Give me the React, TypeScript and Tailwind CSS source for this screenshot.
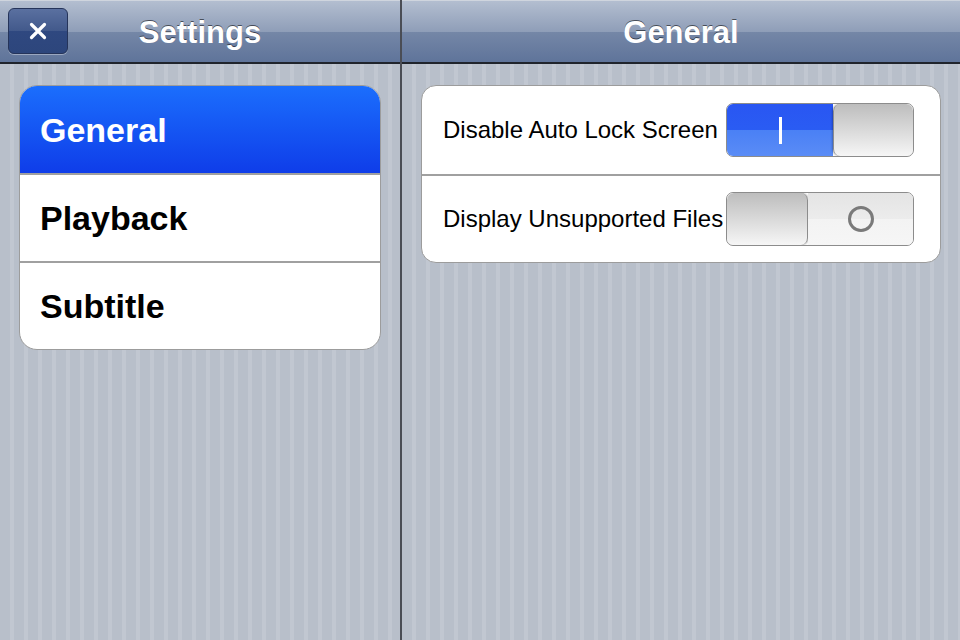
import React from 'react';

const stripes =
  'bg-[repeating-linear-gradient(90deg,#b8bfca_0px,#b8bfca_10px,#c1c7d1_10px,#c1c7d1_14px)]';

function NavBar({ title, withClose }: { title: string; withClose?: boolean }) {
  return (
    <div className="relative h-[64px] border-t border-t-[#cfd5de] border-b-2 border-b-[#20242c] bg-[linear-gradient(180deg,#b3bed0_0%,#8f9eb8_50%,#7587a7_50%,#5f749a_100%)] flex items-center justify-center">
      {withClose && (
        <button className="absolute left-[8px] top-[7px] w-[60px] h-[46px] rounded-[6px] border border-[#25345a] bg-[linear-gradient(180deg,#5a70a0_0%,#42598b_50%,#2f4880_50%,#2d467c_100%)] shadow-[0_1px_0_rgba(255,255,255,0.35)] flex items-center justify-center">
          <svg width="18" height="18" viewBox="0 0 18 18">
            <path d="M2.5 2.5 L15.5 15.5 M15.5 2.5 L2.5 15.5" stroke="#fff" strokeWidth="3.2" strokeLinecap="round" />
          </svg>
        </button>
      )}
      <span className="text-white font-bold text-[31px] leading-none [text-shadow:0_-1px_0_rgba(0,0,0,0.55)] mt-[1px]">
        {title}
      </span>
    </div>
  );
}

function Switch({ on }: { on: boolean }) {
  return (
    <div className="relative w-[188px] h-[54px] rounded-[7px] border border-[#8c8c8c] overflow-hidden flex">
      {on ? (
        <>
          <div className="flex-1 bg-[linear-gradient(180deg,#2956f2_0%,#2a5cf3_50%,#4a80f5_50%,#5a8cf6_100%)] flex items-center justify-center">
            <div className="w-[3px] h-[27px] bg-white" />
          </div>
          <div className="w-[80px] h-full rounded-[7px] border-l border-[#8c8c8c] bg-[linear-gradient(180deg,#bdbdbd_0%,#dcdcdc_55%,#f6f6f6_100%)] shadow-[-1px_0_2px_rgba(0,0,0,0.25)]" />
        </>
      ) : (
        <>
          <div className="w-[81px] h-full rounded-[7px] border-r border-[#8c8c8c] bg-[linear-gradient(180deg,#bdbdbd_0%,#dcdcdc_55%,#f6f6f6_100%)] shadow-[1px_0_2px_rgba(0,0,0,0.25)]" />
          <div className="flex-1 bg-[linear-gradient(180deg,#e4e4e4_0%,#ececec_50%,#f3f3f3_50%,#f6f6f6_100%)] flex items-center justify-center">
            <div className="w-[26px] h-[26px] rounded-full border-[3px] border-[#7a7a7a]" />
          </div>
        </>
      )}
    </div>
  );
}

export default function App() {
  const menu = ['General', 'Playback', 'Subtitle'];
  const settings = [
    { label: 'Disable Auto Lock Screen', on: true },
    { label: 'Display Unsupported Files', on: false },
  ];

  return (
    <div className="w-[960px] h-[640px] flex overflow-hidden font-['Liberation_Sans',Arial,sans-serif]">
      {/* Left - categories */}
      <div className="w-[400px] h-full flex flex-col">
        <NavBar title="Settings" withClose />
        <div className={`flex-1 ${stripes} px-[19px] pt-[21px]`}>
          <div className="rounded-[18px] border border-[#9c9c9c] bg-white overflow-hidden">
            {menu.map((item, i) => (
              <div
                key={item}
                className={
                  i === 0
                    ? 'h-[87px] flex items-center pl-[20px] bg-[linear-gradient(180deg,#1b6efd_0%,#0f3de9_100%)] text-white'
                    : 'h-[88px] flex items-center pl-[20px] border-t-2 border-[#a0a0a0] text-black'
                }
              >
                <span className="text-[34px] font-bold leading-none">{item}</span>
              </div>
            ))}
          </div>
        </div>
      </div>

      {/* Divider */}
      <div className="w-[2px] h-full bg-[#4a4d55]" />

      {/* Right - General */}
      <div className="flex-1 h-full flex flex-col">
        <NavBar title="General" />
        <div className={`flex-1 ${stripes} px-[19px] pt-[21px]`}>
          <div className="rounded-[15px] border border-[#9c9c9c] bg-white overflow-hidden">
            {settings.map((s, i) => (
              <div
                key={s.label}
                className={`h-[88px] flex items-center justify-between pl-[21px] pr-[26px] ${i > 0 ? 'border-t-2 border-[#a0a0a0]' : ''}`}
              >
                <span className="text-[24px] text-black leading-none whitespace-nowrap">{s.label}</span>
                <Switch on={s.on} />
              </div>
            ))}
          </div>
        </div>
      </div>
    </div>
  );
}
